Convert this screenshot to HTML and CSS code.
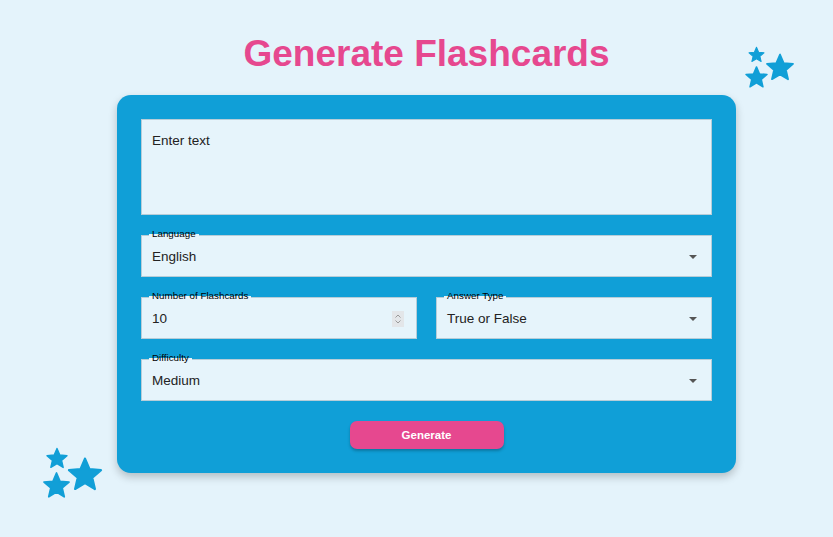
FILE: index.html
```html
<!DOCTYPE html>
<html lang="en">
<head>
<meta charset="utf-8">
<title>Generate Flashcards</title>
<link rel="stylesheet" href="styles.css">
</head>
<body>
<svg class="stars stars-top" width="58" height="50" viewBox="0 0 58 50" aria-hidden="true">
  <path class="star" transform="translate(7.5 3.8) scale(0.75)" d="M12 17.27L18.18 21l-1.64-7.03L22 9.24l-7.19-.61L12 2 9.19 8.63 2 9.24l5.46 4.73L5.82 21z"/>
  <path class="star" transform="translate(3.9 22.8) scale(1.05)" d="M12 17.27L18.18 21l-1.64-7.03L22 9.24l-7.19-.61L12 2 9.19 8.63 2 9.24l5.46 4.73L5.82 21z"/>
  <path class="star" transform="translate(24.4 9.9) scale(1.3)" d="M12 17.27L18.18 21l-1.64-7.03L22 9.24l-7.19-.61L12 2 9.19 8.63 2 9.24l5.46 4.73L5.82 21z"/>
</svg>
<svg class="stars stars-bottom" width="68" height="56" viewBox="0 0 68 56" aria-hidden="true">
  <path class="star" transform="translate(7 2.4) scale(1)" d="M12 17.27L18.18 21l-1.64-7.03L22 9.24l-7.19-.61L12 2 9.19 8.63 2 9.24l5.46 4.73L5.82 21z"/>
  <path class="star" transform="translate(3.5 26.5) scale(1.25)" d="M12 17.27L18.18 21l-1.64-7.03L22 9.24l-7.19-.61L12 2 9.19 8.63 2 9.24l5.46 4.73L5.82 21z"/>
  <path class="star" transform="translate(27.8 11.4) scale(1.6)" d="M12 17.27L18.18 21l-1.64-7.03L22 9.24l-7.19-.61L12 2 9.19 8.63 2 9.24l5.46 4.73L5.82 21z"/>
</svg>

<main class="page">
  <h1 class="title">Generate Flashcards</h1>
  <form class="card">
    <textarea class="text-input" placeholder="Enter text"></textarea>

    <div class="field">
      <span class="field-label">Language</span>
      <div class="select-box">
        <span class="value">English</span>
        <span class="arrow"></span>
      </div>
    </div>

    <div class="row">
      <div class="field">
        <span class="field-label">Number of Flashcards</span>
        <div class="select-box">
          <span class="value">10</span>
          <span class="spinner">
            <svg width="8" height="12" viewBox="0 0 8 12"><path d="M1.5 4.5L4 2l2.5 2.5M1.5 7.5L4 10l2.5-2.5" fill="none" stroke="#9a9a9a" stroke-width="1"/></svg>
          </span>
        </div>
      </div>
      <div class="field">
        <span class="field-label">Answer Type</span>
        <div class="select-box">
          <span class="value">True or False</span>
          <span class="arrow"></span>
        </div>
      </div>
    </div>

    <div class="field">
      <span class="field-label">Difficulty</span>
      <div class="select-box">
        <span class="value">Medium</span>
        <span class="arrow"></span>
      </div>
    </div>

    <div class="actions">
      <button type="button" class="btn">Generate</button>
    </div>
  </form>
</main>
</body>
</html>
```

FILE: styles.css
```css
* { box-sizing: border-box; }

html, body {
  margin: 0;
  height: 100%;
}

body {
  background: #e4f3fb;
  font-family: "Liberation Sans", Arial, sans-serif;
  color: #222;
  position: relative;
  overflow: hidden;
}

.page {
  padding: 32px 0 0 20px;
  display: flex;
  flex-direction: column;
  align-items: center;
}

.title {
  margin: 0 0 19px;
  font-size: 37px;
  line-height: 44px;
  font-weight: 700;
  color: #e6488f;
}

.card {
  width: 619px;
  background: #109fd7;
  border-radius: 14px;
  padding: 24px;
  display: flex;
  flex-direction: column;
  gap: 20px;
  box-shadow: 0 4px 8px rgba(0, 0, 0, 0.22);
}

.text-input {
  display: block;
  width: 100%;
  height: 96px;
  resize: none;
  background: #e6f4fb;
  border: 1px solid #b7cdd8;
  padding: 13px 10px;
  font-family: "Liberation Sans", Arial, sans-serif;
  font-size: 13.5px;
  color: #222;
  outline: none;
}

.text-input::placeholder {
  color: #222;
  opacity: 1;
}

.row {
  display: flex;
  gap: 19px;
}

.row .field {
  flex: 1;
}

.field {
  position: relative;
}

.field-label {
  position: absolute;
  top: -7px;
  left: 8px;
  padding: 0 3px;
  font-size: 9.8px;
  line-height: 12px;
  color: #000;
  background: linear-gradient(to bottom, transparent 50%, #e6f4fb 50%);
  z-index: 1;
}

.select-box {
  height: 42px;
  background: #e6f4fb;
  border: 1px solid #b7cdd8;
  display: flex;
  align-items: center;
  justify-content: space-between;
  padding: 1px 14px 0 10px;
  font-size: 13.5px;
  color: #222;
}

.arrow {
  width: 0;
  height: 0;
  border-left: 4px solid transparent;
  border-right: 4px solid transparent;
  border-top: 4px solid #555;
}

.spinner {
  width: 12px;
  height: 16px;
  background: #e3e6e9;
  display: flex;
  align-items: center;
  justify-content: center;
  margin-right: -2px;
}

.actions {
  display: flex;
  justify-content: center;
}

.btn {
  width: 154px;
  height: 28px;
  border: none;
  border-radius: 7px;
  background: #e6488f;
  color: #fff;
  font-family: "Liberation Sans", Arial, sans-serif;
  font-weight: 700;
  font-size: 11.5px;
  box-shadow: 0 2px 3px rgba(0, 0, 0, 0.25);
}

.stars {
  position: absolute;
  overflow: visible;
}

.stars-top {
  left: 740px;
  top: 42px;
}

.stars-bottom {
  left: 38px;
  top: 444px;
}

.star {
  fill: #119fd7;
  stroke: #119fd7;
  stroke-width: 1.4;
  stroke-linejoin: round;
}
```
